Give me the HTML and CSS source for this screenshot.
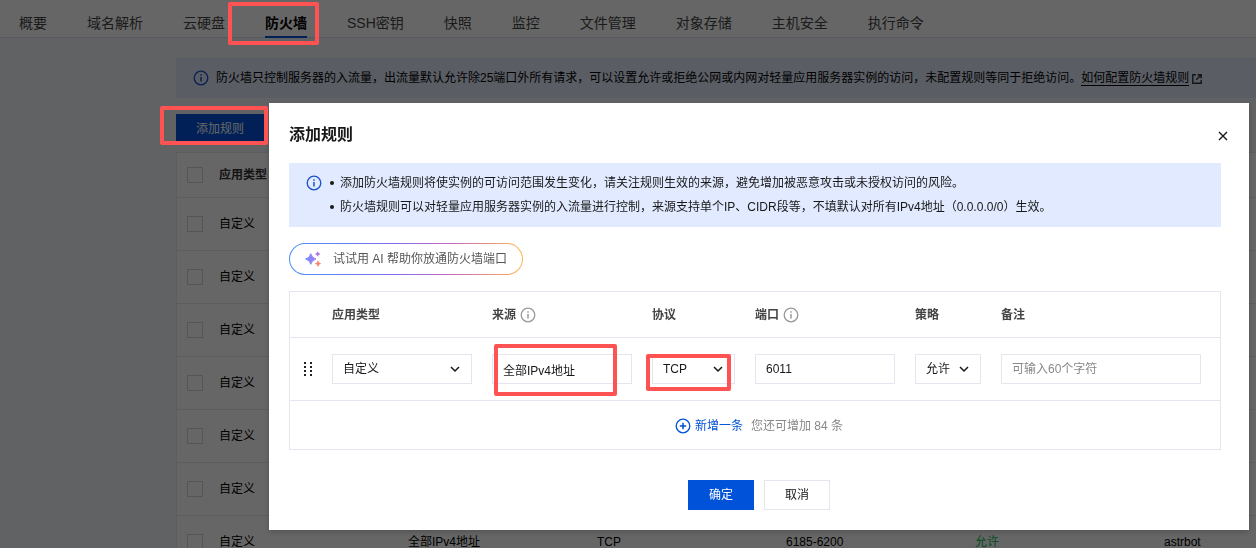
FILE: index.html
```html
<!DOCTYPE html>
<html lang="zh-CN">
<head>
<meta charset="utf-8">
<meta name="viewport" content="width=device-width, initial-scale=1">
<title>防火墙</title>
<link rel="stylesheet" href="styles.css">
</head>
<body>
<svg class="sprite" aria-hidden="true">
  <symbol id="i-info" viewBox="0 0 16 16"><circle cx="8" cy="8" r="6.8" fill="none" stroke="currentColor" stroke-width="1.3"/><path d="M8 7v4.6M8 4.3v1.5" stroke="currentColor" stroke-width="1.5"/></symbol>
  <symbol id="i-chevron" viewBox="0 0 10 10"><path d="M1 3l4 4 4-4" fill="none" stroke="currentColor" stroke-width="1.5"/></symbol>
</svg>

<div class="page">
  <nav class="tabs">
    <a class="tab" href="#">概要</a>
    <a class="tab" href="#">域名解析</a>
    <a class="tab" href="#">云硬盘</a>
    <a class="tab tab-active" href="#" aria-current="page">防火墙</a>
    <a class="tab" href="#">SSH密钥</a>
    <a class="tab" href="#">快照</a>
    <a class="tab" href="#">监控</a>
    <a class="tab" href="#">文件管理</a>
    <a class="tab" href="#">对象存储</a>
    <a class="tab" href="#">主机安全</a>
    <a class="tab" href="#">执行命令</a>
  </nav>
  <main class="content">
    <div class="banner">
      <svg class="icon icon-blue"><use href="#i-info"/></svg>
      <p class="banner-text">防火墙只控制服务器的入流量，出流量默认允许除25端口外所有请求，可以设置允许或拒绝公网或内网对轻量应用服务器实例的访问，未配置规则等同于拒绝访问。<a class="banner-link" href="#">如何配置防火墙规则</a></p>
      <svg class="icon-external" viewBox="0 0 10 10"><path d="M4 .8H.8v8.4h8.4V6M5.6.8h3.6v3.6M9 1L4.2 5.8" fill="none" stroke="currentColor" stroke-width="1.4"/></svg>
    </div>
    <button class="btn btn-primary btn-add" type="button">添加规则</button>
    <table class="rules">
      <colgroup><col class="rc-check"><col class="rc-wide"><col class="rc-wide"><col class="rc-wide"><col class="rc-wide"><col class="rc-wide"><col></colgroup>
      <thead>
        <tr><th><input class="check" type="checkbox" aria-label="全选"></th><th>应用类型</th><th></th><th></th><th></th><th></th><th></th></tr>
      </thead>
      <tbody>
        <tr><td><input class="check" type="checkbox" aria-label="选择"></td><td>自定义</td><td></td><td></td><td></td><td></td><td></td></tr>
        <tr><td><input class="check" type="checkbox" aria-label="选择"></td><td>自定义</td><td></td><td></td><td></td><td></td><td></td></tr>
        <tr><td><input class="check" type="checkbox" aria-label="选择"></td><td>自定义</td><td></td><td></td><td></td><td></td><td></td></tr>
        <tr><td><input class="check" type="checkbox" aria-label="选择"></td><td>自定义</td><td></td><td></td><td></td><td></td><td></td></tr>
        <tr><td><input class="check" type="checkbox" aria-label="选择"></td><td>自定义</td><td></td><td></td><td></td><td></td><td></td></tr>
        <tr><td><input class="check" type="checkbox" aria-label="选择"></td><td>自定义</td><td></td><td></td><td></td><td></td><td></td></tr>
        <tr><td><input class="check" type="checkbox" aria-label="选择"></td><td>自定义</td><td>全部IPv4地址</td><td>TCP</td><td>6185-6200</td><td class="allow">允许</td><td>astrbot</td></tr>
      </tbody>
    </table>
  </main>
</div>

<div class="overlay">
  <section class="dialog" role="dialog" aria-modal="true" aria-labelledby="dialog-title">
    <header class="dialog-head">
      <h2 class="dialog-title" id="dialog-title">添加规则</h2>
      <button class="close" type="button" aria-label="关闭"><svg class="icon-close" viewBox="0 0 10 10"><path d="M1 1l8 8M9 1L1 9" stroke="currentColor" stroke-width="1.4"/></svg></button>
    </header>

    <div class="alert">
      <svg class="icon icon-blue"><use href="#i-info"/></svg>
      <ul class="alert-list">
        <li>添加防火墙规则将使实例的可访问范围发生变化，请关注规则生效的来源，避免增加被恶意攻击或未授权访问的风险。</li>
        <li>防火墙规则可以对轻量应用服务器实例的入流量进行控制，来源支持单个IP、CIDR段等，不填默认对所有IPv4地址（0.0.0.0/0）生效。</li>
      </ul>
    </div>

    <button class="ai" type="button">
      <svg class="icon-ai" viewBox="0 0 16 16">
        <defs><linearGradient id="star" x1="0" y1="0" x2="1" y2="0"><stop offset="0" stop-color="#6f8dff"/><stop offset="1" stop-color="#a77bf3"/></linearGradient></defs>
        <path d="M5.8 2.7Q6.8 7 11 8 6.8 9 5.8 13.3 4.8 9 .6 8 4.8 7 5.8 2.7z" fill="url(#star)" stroke="url(#star)"/>
        <path d="M12.7.8Q13 2.7 14.9 3 13 3.3 12.7 5.2 12.4 3.3 10.5 3 12.4 2.7 12.7.8z" fill="#b06de0" stroke="#b06de0" stroke-width=".6"/>
        <path d="M13 9.8Q13.3 12.2 15.7 12.6 13.3 13 13 15.4 12.7 13 10.3 12.6 12.7 12.2 13 9.8z" fill="#f5846f" stroke="#f5846f" stroke-width=".6"/>
      </svg>
      试试用 AI 帮助你放通防火墙端口
    </button>

    <div class="editor">
      <table class="edit-table">
        <colgroup><col class="ec-handle"><col class="ec-field"><col class="ec-field"><col class="ec-protocol"><col class="ec-field"><col class="ec-policy"><col></colgroup>
        <thead>
          <tr>
            <th></th>
            <th id="h-type">应用类型</th>
            <th id="h-source"><span class="head-help">来源<svg class="icon icon-grey"><use href="#i-info"/></svg></span></th>
            <th id="h-protocol">协议</th>
            <th id="h-port"><span class="head-help">端口<svg class="icon icon-grey"><use href="#i-info"/></svg></span></th>
            <th id="h-policy">策略</th>
            <th id="h-note">备注</th>
          </tr>
        </thead>
        <tbody>
          <tr>
            <td><svg class="icon-drag" viewBox="0 0 10 14" fill="#222"><path d="M1 0h2v2H1zM7 0h2v2H7zM1 4h2v2H1zM7 4h2v2H7zM1 8h2v2H1zM7 8h2v2H7zM1 12h2v2H1zM7 12h2v2H7z"/></svg></td>
            <td><span class="select"><select class="field" aria-labelledby="h-type"><option>自定义</option></select><svg class="chevron"><use href="#i-chevron"/></svg></span></td>
            <td><input class="field" type="text" value="全部IPv4地址" aria-labelledby="h-source"></td>
            <td><span class="select"><select class="field" aria-labelledby="h-protocol"><option>TCP</option></select><svg class="chevron"><use href="#i-chevron"/></svg></span></td>
            <td><input class="field" type="text" value="6011" aria-labelledby="h-port"></td>
            <td><span class="select"><select class="field" aria-labelledby="h-policy"><option>允许</option></select><svg class="chevron"><use href="#i-chevron"/></svg></span></td>
            <td class="note-cell"><input class="field" type="text" placeholder="可输入60个字符" aria-labelledby="h-note"></td>
          </tr>
        </tbody>
      </table>
      <div class="more">
        <button class="add-row" type="button"><svg class="icon" viewBox="0 0 16 16"><circle cx="8" cy="8" r="6.8" fill="none" stroke="currentColor" stroke-width="1.3"/><path d="M8 4.8v6.4M4.8 8h6.4" stroke="currentColor" stroke-width="1.5"/></svg>新增一条</button>
        <span class="quota">您还可增加 84 条</span>
      </div>
    </div>

    <footer class="actions">
      <button class="btn btn-primary" type="button">确定</button>
      <button class="btn btn-plain" type="button">取消</button>
    </footer>
  </section>
</div>

<div class="mark mark-tab"></div>
<div class="mark mark-add"></div>
<div class="mark mark-source"></div>
<div class="mark mark-protocol"></div>
</body>
</html>
```

FILE: styles.css
```css
* { box-sizing: border-box; }

body {
  margin: 0;
  height: 100vh;
  overflow: hidden;
  background: #f3f4f7;
  color: #181818;
  font: 12px/18px "Liberation Sans", "Noto Sans CJK SC", sans-serif;
  text-spacing-trim: space-all;
}

button, input, select { font: inherit; color: inherit; margin: 0; }
button { cursor: pointer; }
p, h2, ul { margin: 0; padding: 0; }
svg { flex: none; display: block; }

.sprite { position: absolute; width: 0; height: 0; }
.icon { width: 16px; height: 16px; }
.icon-blue { color: #1c50c8; }
.icon-grey { color: #999; }

/* Page behind the dialog */
.tabs {
  display: flex;
  gap: 40px;
  height: 38px;
  padding: 8px 19px 0;
  background: #fff;
  border-bottom: 1px solid #dcdfe5;
  white-space: nowrap;
}
.tab {
  height: 30px;
  color: #444;
  font-size: 14px;
  line-height: 30px;
  text-decoration: none;
}
.tab-active {
  color: #000;
  font-weight: bold;
  border-bottom: 2px solid #0052d9;
}

.content { padding: 20px 0 0 176px; }

.banner {
  display: flex;
  align-items: center;
  gap: 7px;
  height: 40px;
  padding: 0 17px;
  background: #e1e8fa;
  color: #000;
  white-space: nowrap;
}
.banner-link {
  color: inherit;
  text-decoration: none;
  border-bottom: 1px solid #000;
}
.icon-external { width: 10px; height: 10px; margin: 2px 0 0 -4px; color: #333; }

.btn {
  height: 30px;
  min-width: 66px;
  padding: 0 16px;
  border: 1px solid #e3e6ef;
  background: #fff;
}
.btn-primary { border-color: #0052d9; background: #0052d9; color: #fff; }
.btn-add { display: block; padding: 0 19px; margin: 16px 0 8px; }

.rules {
  width: 100%;
  table-layout: fixed;
  border-spacing: 0;
  background: #fff;
  border: solid #e7e9ef;
  border-width: 1px 0 0 1px;
  color: #000;
}
.rc-check { width: 32px; }
.rc-wide { width: 189px; }
.rules th, .rules td {
  height: 53px;
  padding: 0 10px;
  border-bottom: 1px solid #e7e9ef;
  text-align: left;
}
.rules th { height: 45px; color: #333; }
.rules .allow { color: #0abf5b; }
.check {
  display: block;
  appearance: none;
  width: 16px;
  height: 16px;
  border: 1px solid #cfd5de;
}

/* Dialog */
.overlay {
  position: fixed;
  inset: 0;
  display: flex;
  justify-content: flex-end;
  align-items: flex-start;
  padding: 103px 7px 0;
  background: rgba(0, 0, 0, .6);
}
.dialog {
  width: 980px;
  max-width: 100%;
  padding: 20px 28px 20px 20px;
  background: #fff;
  box-shadow: 0 2px 6px rgba(0, 0, 0, .2);
}
.dialog-head {
  display: flex;
  align-items: center;
  justify-content: space-between;
  height: 24px;
  margin-bottom: 16px;
}
.dialog-title { font-size: 16px; line-height: 24px; }
.close {
  display: grid;
  place-items: center;
  width: 20px;
  height: 20px;
  margin: 2px -12px 0 0;
  padding: 0;
  border: 0;
  background: none;
}
.icon-close { width: 10px; height: 10px; }

.alert {
  display: flex;
  gap: 8px;
  padding: 8px 17px;
  background: #e1eaff;
  line-height: 24px;
}
.alert .icon { margin-top: 4px; }
.alert-list { list-style: none; }
.alert-list li { display: flex; align-items: center; gap: 6px; }
.alert-list li::before {
  content: "";
  flex: none;
  width: 4px;
  height: 4px;
  border-radius: 50%;
  background: #181818;
}

.ai {
  display: flex;
  align-items: center;
  gap: 12px;
  height: 32px;
  margin: 16px 0;
  padding: 0 15px;
  border: 1px solid transparent;
  border-radius: 16px;
  background:
    linear-gradient(#fff, #fff) padding-box,
    linear-gradient(90deg, #4a90f5, #7d6cf0 45%, #c968bd 70%, #ffb84d) border-box;
  color: #555;
}
.icon-ai { width: 16px; height: 16px; }

.editor { border: 1px solid #e3e6ef; }
.edit-table { width: 100%; table-layout: fixed; border-spacing: 0; }
.ec-handle { width: 32px; }
.ec-field { width: 160px; }
.ec-protocol { width: 103px; }
.ec-policy { width: 86px; }
.edit-table th, .edit-table td {
  height: 63px;
  padding: 0 10px;
  border-bottom: 1px solid #e3e6ef;
  text-align: left;
}
.edit-table th { height: 46px; color: #444; }
.edit-table .note-cell { padding-right: 19px; }
.head-help { display: flex; align-items: center; gap: 4px; }
.icon-drag { width: 10px; height: 14px; margin-left: 3px; }
.field {
  display: block;
  appearance: none;
  width: 100%;
  height: 30px;
  padding: 0 10px;
  border: 1px solid #e3e6ef;
  border-radius: 0;
  background: #fff;
}
.field::placeholder { color: #888; }
.select { display: block; position: relative; }
.chevron {
  position: absolute;
  right: 12px;
  top: 10px;
  width: 10px;
  height: 10px;
  pointer-events: none;
}

.more {
  display: flex;
  align-items: center;
  justify-content: center;
  gap: 8px;
  height: 48px;
  padding: 2px 0 0 8px;
}
.add-row {
  display: flex;
  align-items: center;
  gap: 4px;
  padding: 0;
  border: 0;
  background: none;
  color: #0052d9;
}
.quota { color: #888; }

.actions { display: flex; justify-content: center; gap: 10px; margin: 30px -8px 0 0; }

/* Highlight frames laid over the controls */
.mark {
  position: absolute;
  border: 4px solid #ff5353;
  border-radius: 2px;
  pointer-events: none;
}
.mark-tab { left: 228px; top: 2px; width: 91px; height: 43px; }
.mark-add { left: 160px; top: 106px; width: 108px; height: 39px; }
.mark-source { left: 494px; top: 344px; width: 123px; height: 52px; }
.mark-protocol { left: 646px; top: 354px; width: 85px; height: 37px; }
```
